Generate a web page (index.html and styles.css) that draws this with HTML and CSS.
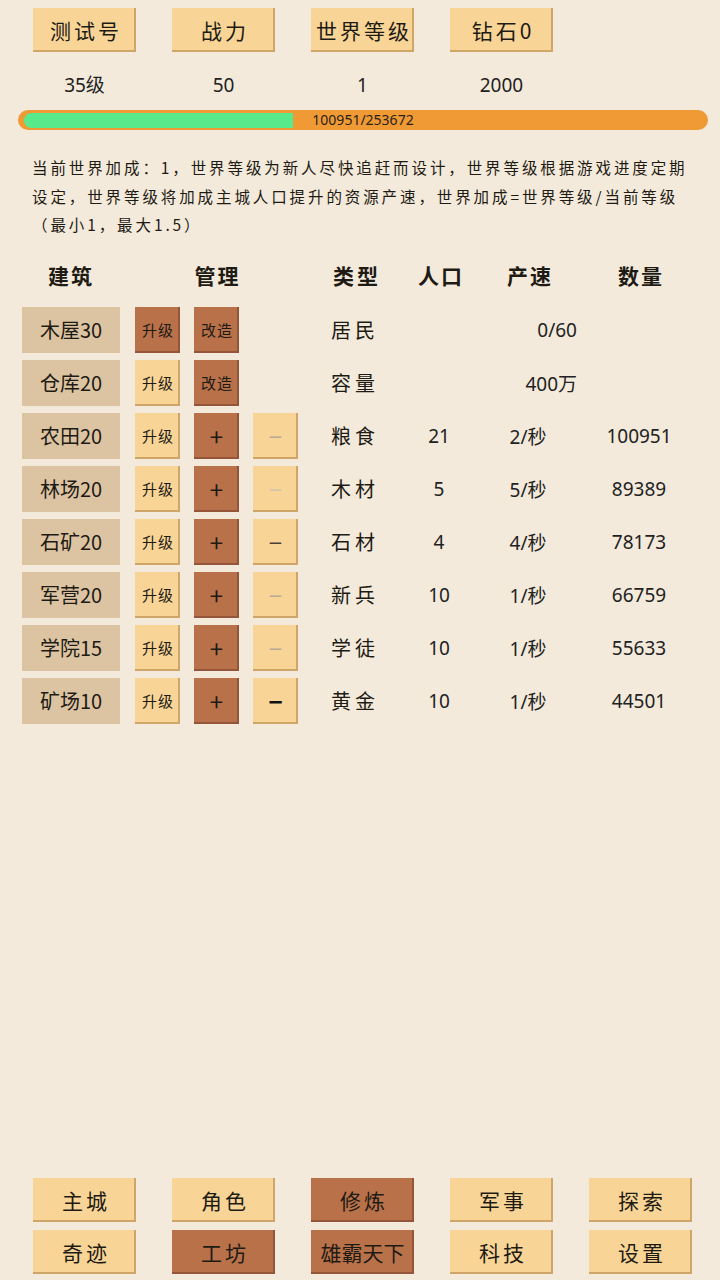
FILE: index.html
```html
<!DOCTYPE html>
<html lang="zh">
<head>
<meta charset="utf-8">
<link rel="stylesheet" href="styles.css">
</head>
<body>
<div class="page">
  <div class="top-bar">
    <div class="btn light big">测试号</div>
    <div class="btn light big">战力</div>
    <div class="btn light big">世界等级</div>
    <div class="btn light big">钻石0</div>
  </div>
  <div class="values">
    <div class="val">35级</div>
    <div class="val">50</div>
    <div class="val">1</div>
    <div class="val">2000</div>
  </div>
  <div class="bar">
    <div class="bar-fill" style="width:269px"></div>
    <div class="bar-label">100951/253672</div>
  </div>
  <p class="note">当前世界加成：1，世界等级为新人尽快追赶而设计，世界等级根据游戏进度定期设定，世界等级将加成主城人口提升的资源产速，世界加成=世界等级/当前等级（最小1，最大1.5）</p>

  <div class="table">
    <div class="head">
      <div class="h-build">建筑</div>
      <div class="h-manage">管理</div>
      <div class="c-type">类型</div>
      <div class="c-pop">人口</div>
      <div class="c-speed">产速</div>
      <div class="c-qty">数量</div>
    </div>
    <div class="rows">
      <div class="row">
        <div class="build">木屋30</div>
        <div class="sq brown small">升级</div>
        <div class="sq brown small">改造</div>
        <div class="sq-empty"></div>
        <div class="c-type">居民</div>
        <div class="c-span">0/60</div>
        <div class="c-qty"></div>
      </div>
      <div class="row">
        <div class="build">仓库20</div>
        <div class="sq light small">升级</div>
        <div class="sq brown small">改造</div>
        <div class="sq-empty"></div>
        <div class="c-type">容量</div>
        <div class="c-span">400万</div>
        <div class="c-qty"></div>
      </div>
      <div class="row">
        <div class="build">农田20</div>
        <div class="sq light small">升级</div>
        <div class="sq brown sign">+</div>
        <div class="sq light sign m-faint">−</div>
        <div class="c-type">粮食</div>
        <div class="c-pop">21</div>
        <div class="c-speed">2/秒</div>
        <div class="c-qty">100951</div>
      </div>
      <div class="row">
        <div class="build">林场20</div>
        <div class="sq light small">升级</div>
        <div class="sq brown sign">+</div>
        <div class="sq light sign m-pale">−</div>
        <div class="c-type">木材</div>
        <div class="c-pop">5</div>
        <div class="c-speed">5/秒</div>
        <div class="c-qty">89389</div>
      </div>
      <div class="row">
        <div class="build">石矿20</div>
        <div class="sq light small">升级</div>
        <div class="sq brown sign">+</div>
        <div class="sq light sign m-mid">−</div>
        <div class="c-type">石材</div>
        <div class="c-pop">4</div>
        <div class="c-speed">4/秒</div>
        <div class="c-qty">78173</div>
      </div>
      <div class="row">
        <div class="build">军营20</div>
        <div class="sq light small">升级</div>
        <div class="sq brown sign">+</div>
        <div class="sq light sign m-faint">−</div>
        <div class="c-type">新兵</div>
        <div class="c-pop">10</div>
        <div class="c-speed">1/秒</div>
        <div class="c-qty">66759</div>
      </div>
      <div class="row">
        <div class="build">学院15</div>
        <div class="sq light small">升级</div>
        <div class="sq brown sign">+</div>
        <div class="sq light sign m-faint">−</div>
        <div class="c-type">学徒</div>
        <div class="c-pop">10</div>
        <div class="c-speed">1/秒</div>
        <div class="c-qty">55633</div>
      </div>
      <div class="row">
        <div class="build">矿场10</div>
        <div class="sq light small">升级</div>
        <div class="sq brown sign">+</div>
        <div class="sq light sign m-dark">−</div>
        <div class="c-type">黄金</div>
        <div class="c-pop">10</div>
        <div class="c-speed">1/秒</div>
        <div class="c-qty">44501</div>
      </div>
    </div>
  </div>

  <div class="nav">
    <div class="btn light big">主城</div>
    <div class="btn light big">角色</div>
    <div class="btn brown big">修炼</div>
    <div class="btn light big">军事</div>
    <div class="btn light big">探索</div>
    <div class="btn light big">奇迹</div>
    <div class="btn brown big">工坊</div>
    <div class="btn brown big tight">雄霸天下</div>
    <div class="btn light big">科技</div>
    <div class="btn light big">设置</div>
  </div>
</div>
</body>
</html>
```

FILE: styles.css
```css
* { box-sizing: border-box; }
html, body {
  margin: 0;
  padding: 0;
}
body {
  background: #f3eadb;
  color: #222;
  font-family: "Noto Sans", "Noto Sans CJK SC", sans-serif;
}
.page {
  width: 720px;
  min-height: 1280px;
  display: flex;
  flex-direction: column;
  padding-bottom: 6px;
}
.top-bar, .values, .nav {
  display: grid;
  grid-template-columns: repeat(5, 103px);
  column-gap: 36px;
  padding-left: 33px;
}
.top-bar { padding-top: 8px; }
.btn {
  height: 44px;
  display: flex;
  align-items: center;
  justify-content: center;
  font-family: "Noto Sans CJK SC", sans-serif;
  color: #1e1a14;
}
.light {
  background: #f8d596;
  box-shadow: inset -2px -2px 0 #cfa568;
}
.brown {
  background: #b9714a;
  box-shadow: inset -2px -2px 0 #94553a;
}
.big {
  font-size: 21px;
  letter-spacing: 3px;
  padding-left: 3px;
}
.tight { letter-spacing: 0; padding-left: 0; }
.values {
  padding-top: 8px;
  height: 58px;
}
.val {
  line-height: 50px;
  text-align: center;
  font-size: 19px;
  color: #222;
}
.bar {
  position: relative;
  margin-left: 18px;
  width: 690px;
  height: 20px;
  border-radius: 10px;
  background: #ef9a34;
  padding: 3px 0 2px 6px;
}
.bar-fill {
  height: 15px;
  background: #58e98b;
  border-radius: 8px 0 0 8px;
}
.bar-label {
  position: absolute;
  left: 0;
  right: 0;
  top: 0;
  line-height: 20px;
  text-align: center;
  font-size: 14px;
  color: #2a2218;
}
.note {
  margin: 23px 28px 0 32px;
  font-family: "Noto Sans CJK SC", sans-serif;
  font-size: 15.5px;
  letter-spacing: 2.9px;
  line-height: 28.5px;
  color: #1e1a14;
}
.table {
  margin-top: 16px;
}
.head {
  display: flex;
  align-items: center;
  height: 40px;
  padding-left: 22px;
  font-family: "Noto Sans CJK SC", sans-serif;
  font-weight: 700;
  font-size: 21px;
  letter-spacing: 2px;
  color: #1e1a14;
}
.h-build { width: 98px; text-align: center; margin-right: 15px; }
.h-manage { width: 165px; text-align: center; margin-right: 33px; }
.rows {
  margin-top: 12px;
  display: flex;
  flex-direction: column;
  gap: 7px;
}
.row {
  display: flex;
  align-items: center;
  height: 46px;
  padding-left: 22px;
  font-size: 19px;
}
.build {
  width: 98px;
  height: 46px;
  margin-right: 15px;
  background: #dcc4a2;
  display: flex;
  align-items: center;
  justify-content: center;
  font-family: "Noto Sans CJK SC", sans-serif;
  font-size: 20px;
  color: #1e1a14;
}
.sq, .sq-empty {
  width: 45px;
  height: 46px;
  margin-right: 14px;
  display: flex;
  align-items: center;
  justify-content: center;
  font-family: "Noto Sans CJK SC", sans-serif;
  color: #1e1a14;
}
.sq-empty { margin-right: 33px; }
.sq.m-faint, .sq.m-pale, .sq.m-mid, .sq.m-dark { margin-right: 33px; }
.small { font-size: 15px; letter-spacing: 1px; padding-left: 1px; }
.sign { font-size: 24px; font-weight: 400; }
.m-faint { color: #b7aa98; }
.m-pale { color: #d2c3aa; }
.m-mid { color: #4a4038; }
.m-dark { color: #111; font-weight: 700; }
.c-type {
  width: 68px;
  font-family: "Noto Sans CJK SC", sans-serif;
  letter-spacing: 3px;
  color: #1e1a14;
}
.row .c-type { font-size: 20px; letter-spacing: 4px; }
.c-pop { width: 80px; text-align: center; }
.c-speed { width: 98px; text-align: center; }
.c-qty { width: 124px; text-align: center; }
.head .c-pop, .head .c-speed, .head .c-qty { letter-spacing: 2px; }
.c-span { width: 178px; text-align: right; }
.nav {
  margin-top: auto;
  row-gap: 8px;
}
```
